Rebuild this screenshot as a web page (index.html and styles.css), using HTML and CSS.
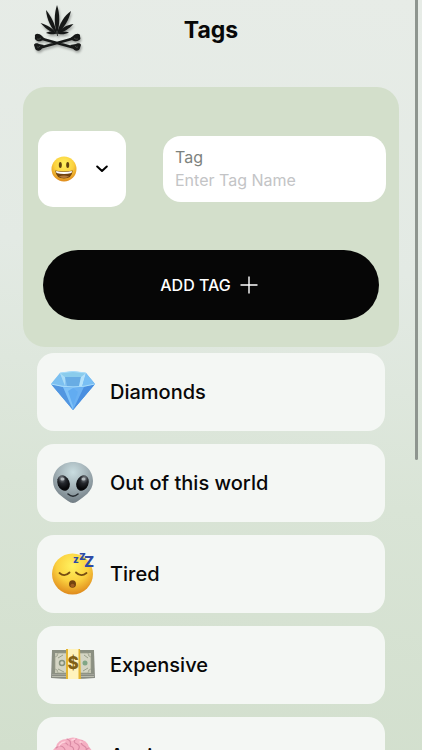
FILE: index.html
```html
<!DOCTYPE html>
<html lang="en">
<head>
  <meta charset="UTF-8">
  <meta name="viewport" content="width=device-width, initial-scale=1.0">
  <title>Tags</title>
  <link rel="stylesheet" href="styles.css">
</head>
<body>
  <div class="screen">
    <header class="header">
      <svg class="logo" viewBox="0 0 48 48" aria-label="Logo">
        <g fill="#161817">
          <path d="M23 29C20 19 20 9 23 0C26 9 26 19 23 29Z"/>
          <path d="M23 29C17 23 13 15 12 5C17 11 21 19 23 29Z"/>
          <path d="M23 29C25 19 30 11 37 6C35 15 30 23 23 29Z"/>
          <path d="M23 29C16 27 11 23 6.500 18C13 20 19 23 23 29Z"/>
          <path d="M23 29C27 23 32 20 39.500 19C35 24 30 27 23 29Z"/>
          <path d="M23 28C19 26 15 26 12 28C16 29.500 20 30 23 28C26 30 31 29.500 35 27.500C31 26 27 26 23 28Z"/>
        </g>
        <path d="M23 26L23.500 31" stroke="#333634" stroke-width="1"/>
        <g stroke="#171918" stroke-width="2.600" stroke-linecap="round">
          <path d="M5 33L41 43M5 43L41 33"/>
        </g>
        <g fill="#171918">
          <path d="M1 32C0 28 5 28 8 31L11 34L7 36C4 37 0 35 1 32Z"/>
          <path d="M0 40C0 38 4 38 5 39L10 40L8 43C7 47 1 46 1 43Z"/>
          <path d="M46 32C47 28 42 28 39 31L35 34L40 36C43 37 48 35 46 32Z"/>
          <path d="M47 40C47 38 43 38 42 39L36 40L39 43C40 47 46 46 46 43Z"/>
        </g>
        <g fill="none" stroke="#5d615e" stroke-width=".600">
          <path d="M3 34Q5 35 7 33M3 42Q5 43 6 41M44 34Q42 35 40 33M44 42Q42 43 41 41"/>
        </g>
      </svg>
      <h1 class="title">Tags</h1>
    </header>

    <form class="tag-form">
      <div class="form-row">
        <div class="emoji-picker">
          <select class="emoji-select" aria-label="Emoji">
            <option>Smile</option>
            <option>Diamond</option>
            <option>Alien</option>
          </select>
          <svg class="emoji-value" viewBox="0 0 26 26" aria-hidden="true">
            <defs>
              <radialGradient id="face" cx=".5" cy=".3" r=".7">
                <stop offset="0" stop-color="#fff25f"/>
                <stop offset=".55" stop-color="#fbd13f"/>
                <stop offset="1" stop-color="#df8a1c"/>
              </radialGradient>
            </defs>
            <circle cx="13" cy="13" r="12.500" fill="url(#face)"/>
            <ellipse cx="9.300" cy="9" rx="1.500" ry="3" fill="#60420f"/>
            <ellipse cx="16.700" cy="9" rx="1.500" ry="3" fill="#60420f"/>
            <path d="M4.300 14.500Q13 16.500 21.700 14.500Q21 22.500 13 22.500Q5 22.500 4.300 14.500Z" fill="#70420f"/>
            <path d="M5 15Q13 17 21 15L20.500 17Q13 19 5.500 17Z" fill="#fff"/>
            <path d="M8 20.500Q13 18.500 18 20.500Q13 23.500 8 20.500Z" fill="#b47a3c"/>
          </svg>
          <svg class="chevron" viewBox="0 0 12 8" aria-hidden="true">
            <path d="M1.200 1.500L6 6L10.800 1.500" fill="none" stroke="#000" stroke-width="2" stroke-linecap="round" stroke-linejoin="round"/>
          </svg>
        </div>
        <div class="field">
          <label class="field-label" for="tagName">Tag</label>
          <input class="field-input" id="tagName" type="text" placeholder="Enter Tag Name">
        </div>
      </div>
      <button class="add-btn" type="button">
        ADD TAG
        <svg class="plus" viewBox="0 0 18 18" aria-hidden="true">
          <path d="M9 .500V17.500M.500 9H17.500" fill="none" stroke="#fff" stroke-width="1.400"/>
        </svg>
      </button>
    </form>

    <ul class="tag-list">
      <li class="tag">
        <svg class="tag-icon" viewBox="0 0 44 44" aria-hidden="true">
          <defs>
            <linearGradient id="gem" x1="0" y1="0" x2="1" y2="1">
              <stop offset="0" stop-color="#b4e4fa"/>
              <stop offset="1" stop-color="#2d83df"/>
            </linearGradient>
          </defs>
          <path d="M9 3Q22 0 35 3L44 14L22 40L0 14Z" fill="url(#gem)"/>
          <path d="M9 3L14 16L0 14Z" fill="#7cc0f0"/>
          <path d="M9 3L14 7L14 16Z" fill="#a9dcf7"/>
          <path d="M9 3Q22 0 35 3L30 7H14Z" fill="#8accec"/>
          <path d="M14 7H30L28 16H16Z" fill="#68ace4"/>
          <path d="M30 7L35 3L31 17L28 16Z" fill="#b5e2fa"/>
          <path d="M35 3L44 14L31 17Z" fill="#79bff4"/>
          <path d="M0 14Q22 21 44 14L22 40Z" fill="#5fa8ee"/>
          <path d="M0 14L12 17L22 40Z" fill="#5296e0"/>
          <path d="M12 17L22 18V40Z" fill="#7fc2f7"/>
          <path d="M22 18L33 17L22 40Z" fill="#6bb1f2"/>
          <path d="M33 17L44 14L22 40Z" fill="#4a8fe0"/>
          <path d="M17 21L22 18L27 22L22 36Z" fill="#62acf1"/>
          <path d="M0 14Q22 20 44 14M9 3Q22 0 35 3" fill="none" stroke="#a9ddfb" stroke-width="1"/>
        </svg>
        <span class="tag-name">Diamonds</span>
      </li>
      <li class="tag">
        <svg class="tag-icon" viewBox="0 0 44 44" aria-hidden="true">
          <defs>
            <radialGradient id="alien" cx=".5" cy=".25" r=".75">
              <stop offset="0" stop-color="#c9dde0"/>
              <stop offset=".5" stop-color="#a2b1b6"/>
              <stop offset="1" stop-color="#707c83"/>
            </radialGradient>
            <radialGradient id="eye" cx=".5" cy=".2" r=".65">
              <stop offset="0" stop-color="#858b91"/>
              <stop offset=".5" stop-color="#24272c"/>
              <stop offset="1" stop-color="#08090b"/>
            </radialGradient>
          </defs>
          <path d="M22 1C34 1 42 10 42 20C42 31 32 36 27 40Q22 44 17 40C12 36 2 31 2 20C2 10 10 1 22 1Z" fill="url(#alien)"/>
          <ellipse cx="12.500" cy="22" rx="6" ry="8" fill="url(#eye)" transform="rotate(-22 12.500 22)"/>
          <ellipse cx="31.500" cy="22" rx="6" ry="8" fill="url(#eye)" transform="rotate(22 31.500 22)"/>
          <ellipse cx="11.500" cy="18" rx="2" ry="1.600" fill="#b3babd"/>
          <ellipse cx="32.500" cy="18" rx="2" ry="1.600" fill="#b3babd"/>
          <path d="M17 33Q22 37.500 27 33" fill="none" stroke="#252b2f" stroke-width="1.600" stroke-linecap="round"/>
        </svg>
        <span class="tag-name">Out of this world</span>
      </li>
      <li class="tag">
        <svg class="tag-icon" viewBox="0 0 44 44" aria-hidden="true">
          <circle cx="21.500" cy="22" r="20.500" fill="url(#face)"/>
          <path d="M8.500 21Q13.500 25.500 18.500 20.500M25 20.500Q30 25.500 35.500 21" fill="none" stroke="#764d12" stroke-width="1.800" stroke-linecap="round"/>
          <ellipse cx="21.500" cy="32" rx="3.500" ry="3.800" fill="#73430f"/>
          <ellipse cx="21.500" cy="33.500" rx="2" ry="1.800" fill="#a15d21"/>
          <g class="snore" fill="#2e4ba6">
            <text x="22" y="11" font-size="10">z</text>
            <text x="28" y="8" font-size="12">z</text>
            <text x="33" y="15" font-size="15">Z</text>
          </g>
        </svg>
        <span class="tag-name">Tired</span>
      </li>
      <li class="tag">
        <svg class="tag-icon" viewBox="0 0 44 44" aria-hidden="true">
          <path d="M1 8H43L44 35Q22 37 0 35Z" fill="#8a8d84"/>
          <path d="M1 31H43M1 33.500H43" stroke="#b9bcad" stroke-width="1"/>
          <path d="M1 7H43V31H1Z" fill="#8b9082"/>
          <path d="M4 10H40V30H4Z" fill="#c5c7b4"/>
          <path d="M7 10H37Q37 14 40 14V26Q37 26 37 30H7Q7 26 4 26V14Q7 14 7 10Z" fill="#d4d5c4" stroke="#9a9e8b" stroke-width=".700"/>
          <circle cx="11" cy="20" r="2.500" fill="none" stroke="#85917d" stroke-width="1.500"/>
          <circle cx="34" cy="20" r="2.500" fill="#80a686"/>
          <path d="M7 15L12 12M7 26L13 29M33 12L37 15M32 28L37 25" stroke="#98a08a" stroke-width="1"/>
          <path d="M15 6H29L30 36H15Z" fill="#e3b430"/>
          <path d="M17 6H27.500V36H17Z" fill="#fff3bd"/>
          <text class="dollar" x="22" y="26" text-anchor="middle" font-size="17" fill="#806017">$</text>
        </svg>
        <span class="tag-name">Expensive</span>
      </li>
      <li class="tag">
        <svg class="tag-icon" viewBox="0 0 44 44" aria-hidden="true">
          <path d="M2 25Q-1 17 5 13Q7 5 16 5Q22 2 28 5Q36 6 38 13Q43 17 41 25Q40 31 34 32L26 34L22 40Q17 37 18 33Q11 35 8 31Q2 31 2 25Z" fill="#f5b0c3"/>
          <g fill="none" stroke="#d98aa4" stroke-width="1.200" stroke-linecap="round">
            <path d="M5 14Q10 10 13 14Q16 18 11 20M10 9Q14 7 17 11M16 5Q21 7 19 12M19 12Q24 13 22 18M25 5Q21 8 26 10Q30 12 27 16M31 7Q29 10 33 12Q37 14 34 18M38 14Q35 14 35 20M3 22Q9 18 12 25M15 21Q21 19 22 26Q28 27 29 22Q34 20 38 24M10 30Q16 25 22 30Q29 26 34 30"/>
          </g>
          <path d="M8 12Q10 8 14 8M21 6L24 5M29 8L31 8" fill="none" stroke="#ffd3dd" stroke-width="1.500" stroke-linecap="round"/>
        </svg>
        <span class="tag-name">Anxious</span>
      </li>
    </ul>
  </div>
  <div class="scroll-thumb"></div>
</body>
</html>
```

FILE: styles.css
```css
* {
  box-sizing: border-box;
}

body {
  margin: 0;
  height: 100vh;
  overflow: hidden;
  background: linear-gradient(185deg, #e7ece7 0%, #e3eae4 35%, #d9e4d6 65%, #d2dfcd 100%);
  font-family: Inter, "Liberation Sans", sans-serif;
  color: #080808;
}

.screen {
  height: 100%;
  overflow-y: auto;
  scrollbar-width: none;
}

.header {
  display: grid;
  grid-template-columns: 1fr auto 1fr;
  align-items: start;
  height: 87px;
  padding: 5px 34px;
}

.logo {
  width: 48px;
  height: 48px;
  filter: drop-shadow(1px 2px 1px rgba(0, 0, 0, 0.3));
}

.title {
  margin: 9px 0 0;
  font-size: 23px;
  line-height: 32px;
  font-weight: 700;
}

/* New tag form */
.tag-form {
  margin: 0 23px 6px;
  padding: 44px 13px 27px 15px;
  border-radius: 22px;
  background-color: #d3dfcb;
}

.form-row {
  display: flex;
  align-items: center;
  gap: 37px;
  margin-bottom: 43px;
}

.emoji-picker {
  display: grid;
  align-items: center;
  width: 88px;
  height: 76px;
}

.emoji-select,
.emoji-value,
.chevron {
  grid-area: 1 / 1;
}

.emoji-select {
  appearance: none;
  width: 100%;
  height: 100%;
  border: none;
  border-radius: 15px;
  background-color: #fff;
  color: transparent;
  font-size: 16px;
}

.emoji-select option {
  color: #080808;
}

.emoji-value {
  width: 26px;
  height: 26px;
  margin-left: 13px;
  pointer-events: none;
}

.chevron {
  justify-self: end;
  width: 12px;
  height: 8px;
  margin-right: 18px;
  pointer-events: none;
}

.field {
  display: flex;
  flex: 1;
  flex-direction: column;
  min-width: 0;
  padding: 10px 12px;
  border-radius: 18px;
  background-color: #fff;
}

.field-label,
.field-input {
  font-family: inherit;
  font-size: 16px;
  line-height: 23px;
}

.field-label {
  color: #7d827d;
}

.field-input {
  width: 100%;
  height: 23px;
  padding: 0;
  border: none;
  outline: none;
  background: none;
}

.field-input::placeholder {
  color: #c3c4c6;
}

.add-btn {
  display: flex;
  align-items: center;
  justify-content: center;
  gap: 9px;
  width: calc(100% - 12px);
  height: 70px;
  margin-left: 5px;
  padding: 0 10px 0 6px;
  border: none;
  border-radius: 35px;
  background-color: #060606;
  color: #fff;
  font-family: inherit;
  font-size: 16px;
  font-weight: 500;
  cursor: pointer;
}

.plus {
  width: 18px;
  height: 18px;
}

/* Saved tags */
.tag-list {
  display: flex;
  flex-direction: column;
  gap: 13px;
  margin: 0;
  padding: 0 37px 13px;
  list-style: none;
}

.tag {
  display: flex;
  align-items: center;
  gap: 15px;
  height: 78px;
  padding: 0 14px;
  border-radius: 17px;
  background-color: #f4f7f4;
}

.tag-icon {
  flex: none;
  width: 44px;
  height: 44px;
  overflow: visible;
}

.tag-name {
  font-size: 20px;
  line-height: 24px;
  font-weight: 500;
}

.snore,
.dollar {
  font-weight: 800;
}

.scroll-thumb {
  position: fixed;
  top: 0;
  right: 4px;
  width: 3px;
  height: 460px;
  border-radius: 0 0 2px 2px;
  background-color: #8e958f;
}
```
